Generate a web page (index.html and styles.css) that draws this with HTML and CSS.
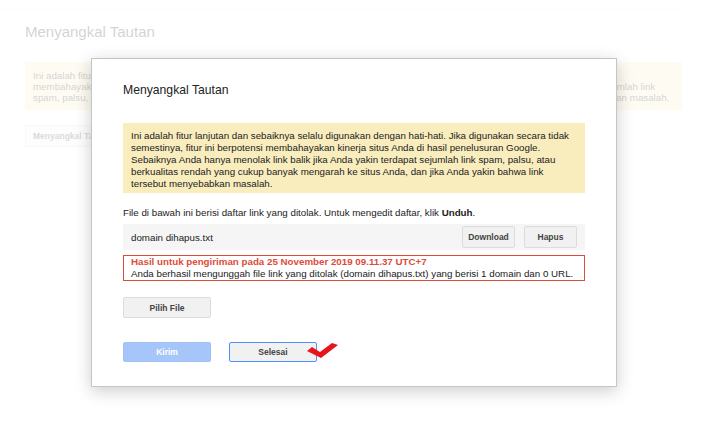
FILE: index.html
```html
<!DOCTYPE html>
<html lang="id">
<head>
  <meta charset="UTF-8">
  <title>Menyangkal Tautan</title>
  <link rel="stylesheet" href="styles.css">
</head>
<body>
  <div class="page">
    <div class="topbar"></div>
    <div class="page-body">
      <h1 class="page-title">Menyangkal Tautan</h1>
      <div class="page-note">
        Ini adalah fitur lanjutan dan sebaiknya selalu digunakan dengan hati-hati. Jika digunakan secara tidak semestinya, fitur ini berpotensi<br>
        membahayakan kinerja situs Anda di hasil penelusuran Google. Sebaiknya Anda hanya menolak link balik jika Anda yakin terdapat sejumlah link<br>
        spam, palsu, atau berkualitas rendah yang cukup banyak mengarah ke situs Anda, dan jika Anda yakin bahwa link tersebut menyebabkan masalah.
      </div>
      <button class="page-btn">Menyangkal Tautan</button>
    </div>
  </div>

  <div class="overlay">
    <div class="dialog">
      <h2 class="dialog-title">Menyangkal Tautan</h2>
      <div class="warning">
        Ini adalah fitur lanjutan dan sebaiknya selalu digunakan dengan hati-hati. Jika digunakan secara tidak<br>
        semestinya, fitur ini berpotensi membahayakan kinerja situs Anda di hasil penelusuran Google.<br>
        Sebaiknya Anda hanya menolak link balik jika Anda yakin terdapat sejumlah link spam, palsu, atau<br>
        berkualitas rendah yang cukup banyak mengarah ke situs Anda, dan jika Anda yakin bahwa link<br>
        tersebut menyebabkan masalah.
      </div>
      <p class="file-info">File di bawah ini berisi daftar link yang ditolak. Untuk mengedit daftar, klik <b>Unduh</b>.</p>
      <div class="file-row">
        <span class="file-name">domain dihapus.txt</span>
        <div class="file-actions">
          <button class="btn">Download</button>
          <button class="btn">Hapus</button>
        </div>
      </div>
      <div class="result">
        <div class="result-title">Hasil untuk pengiriman pada 25 November 2019 09.11.37 UTC+7</div>
        <div>Anda berhasil mengunggah file link yang ditolak (domain dihapus.txt) yang berisi 1 domain dan 0 URL.</div>
      </div>
      <button class="btn btn-wide pick">Pilih File</button>
      <div class="dialog-actions">
        <button class="btn btn-wide btn-primary">Kirim</button>
        <button class="btn btn-wide btn-focus">Selesai</button>
        <svg class="check" width="34" height="18" viewBox="0 0 34 18">
          <polygon points="0,8 5,4 13,9 25,0 31,2 14,15" fill="#e8141c"/>
        </svg>
      </div>
    </div>
  </div>
</body>
</html>
```
FILE: styles.css
```css
body {
  margin: 0;
  font-family: "Liberation Sans", Arial, sans-serif;
  color: #222;
  background: #fff;
  height: 429px;
  overflow: hidden;
  position: relative;
}
button {
  font-family: inherit;
}
.topbar {
  width: 682px;
  height: 9px;
  border-bottom: 1px solid #ebebeb;
}
.page-body {
  width: 657px;
  padding-left: 25px;
}
.page-title {
  margin: 13px 0 0;
  font-size: 15px;
  font-weight: normal;
  line-height: 18px;
  color: #222;
}
.page-note {
  margin-top: 21px;
  padding: 8px 8px 7px;
  background: #f9edbe;
  font-size: 9.75px;
  line-height: 11px;
  white-space: nowrap;
  overflow: hidden;
  color: #222;
}
.page-btn {
  margin-top: 15px;
  height: 22px;
  padding: 0 7px;
  background: #f5f5f5;
  border: 1px solid #ddd;
  border-radius: 2px;
  font-size: 8.5px;
  font-weight: bold;
  color: #444;
}
.overlay {
  position: absolute;
  inset: 0;
  background: rgba(255, 255, 255, 0.8);
}
.dialog {
  position: absolute;
  left: 91px;
  top: 58px;
  width: 462px;
  padding: 0 31px 24px;
  background: #fff;
  border: 1px solid #c5c5c5;
  box-shadow: 0 4px 16px rgba(0, 0, 0, 0.2);
}
.dialog-title {
  margin: 24px 0 0;
  font-size: 12.2px;
  font-weight: normal;
  line-height: 14px;
  color: #222;
}
.warning {
  margin-top: 26px;
  padding: 7px 8px 3px;
  background: #f9edbe;
  font-size: 9.75px;
  line-height: 12px;
  white-space: nowrap;
  color: #222;
}
.file-info {
  margin: 14px 0 0;
  font-size: 9.75px;
  line-height: 12px;
}
.file-row {
  margin-top: 5px;
  height: 26px;
  display: flex;
  align-items: center;
  justify-content: space-between;
  padding: 0 8px;
  background: #f5f5f5;
  font-size: 9.75px;
}
.file-actions {
  display: flex;
  gap: 9px;
}
.btn {
  height: 22px;
  width: 53px;
  padding: 0;
  background: #f1f1f1;
  border: 1px solid #dcdcdc;
  border-radius: 2px;
  font-size: 8.5px;
  font-weight: bold;
  color: #444;
}
.btn-wide {
  width: 88px;
  height: 21px;
}
.result {
  margin-top: 5px;
  padding: 0 7px;
  border: 1px solid #dd4b39;
  font-size: 9.75px;
  line-height: 12px;
}
.result-title {
  color: #dd4b39;
  font-weight: bold;
}
.pick {
  display: block;
  margin-top: 16px;
}
.dialog-actions {
  margin-top: 24px;
  display: flex;
  align-items: center;
  gap: 18px;
  position: relative;
}
.btn-primary {
  height: 20px;
  background: #a6c6f9;
  border-color: #a0c1f7;
  color: #fff;
}
.btn-focus {
  height: 20px;
  border-color: #4d90fe;
}
.check {
  position: absolute;
  left: 184px;
  top: 1px;
}
```
